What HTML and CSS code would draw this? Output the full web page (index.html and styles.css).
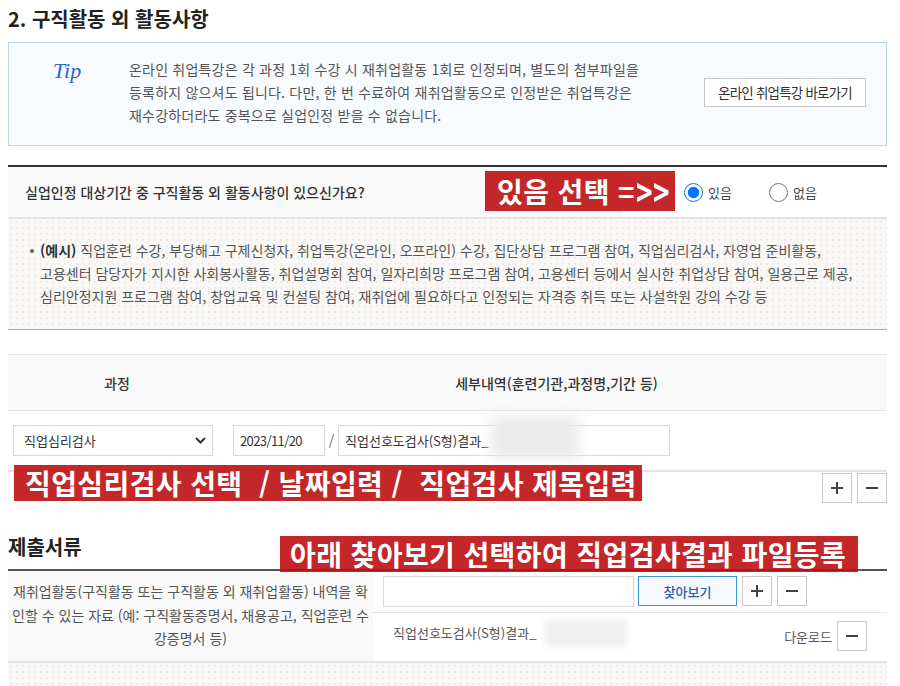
FILE: index.html
```html
<!DOCTYPE html>
<html lang="ko">
<head>
    <meta charset="utf-8">
    <title>재취업활동 - 구직활동 외 활동사항</title>
    <link rel="stylesheet" href="styles.css">
</head>
<body>
    <div class="wrap">
        <h3 class="sec-title">2. 구직활동 외 활동사항</h3>

        <div class="tip-box">
            <span class="tip-mark">Tip</span>
            <p class="tip-text">온라인 취업특강은 각 과정 1회 수강 시 재취업활동 1회로 인정되며, 별도의 첨부파일을<br>등록하지 않으셔도 됩니다. 다만, 한 번 수료하여 재취업활동으로 인정받은 취업특강은<br>재수강하더라도 중복으로 실업인정 받을 수 없습니다.</p>
            <a class="btn-line" href="#">온라인 취업특강 바로가기</a>
        </div>

        <div class="ask-row">
            <div class="ask-th">실업인정 대상기간 중 구직활동 외 활동사항이 있으신가요?</div>
            <div class="ask-td">
                <label class="radio-item"><input type="radio" name="hasAct" checked> 있음</label>
                <label class="radio-item"><input type="radio" name="hasAct"> 없음</label>
            </div>
            <span class="note note-radio">있음 선택 =<span class="chev">&gt;&gt;</span></span>
        </div>

        <div class="example-box">
            <ul>
                <li><strong>(예시)</strong> 직업훈련 수강, 부당해고 구제신청자, 취업특강(온라인, 오프라인) 수강, 집단상담 프로그램 참여, 직업심리검사, 자영업 준비활동,<br>고용센터 담당자가 지시한 사회봉사활동, 취업설명회 참여, 일자리희망 프로그램 참여, 고용센터 등에서 실시한 취업상담 참여, 일용근로 제공,<br>심리안정지원 프로그램 참여, 창업교육 및 컨설팅 참여, 재취업에 필요하다고 인정되는 자격증 취득 또는 사설학원 강의 수강 등</li>
            </ul>
        </div>

        <table class="course-table">
            <colgroup>
                <col class="col-course">
                <col>
            </colgroup>
            <thead>
                <tr>
                    <th>과정</th>
                    <th>세부내역(훈련기관,과정명,기간 등)</th>
                </tr>
            </thead>
            <tbody>
                <tr>
                    <td class="td-course">
                        <div class="sel-wrap">
                            <select class="sel">
                                <option>직업심리검사</option>
                            </select>
                            <svg class="sel-arrow" width="11" height="7" viewBox="0 0 11 7"><polyline points="1,1 5.5,5.5 10,1" fill="none" stroke="#333" stroke-width="2"/></svg>
                        </div>
                    </td>
                    <td class="td-detail">
                        <div class="detail-line">
                            <input class="inp inp-date" type="text" value="2023/11/20">
                            <span class="slash">/</span>
                            <input class="inp inp-title" type="text" value="직업선호도검사(S형)결과_">
                            <span class="blur-mask mask-title"></span>
                        </div>
                    </td>
                </tr>
            </tbody>
        </table>

        <div class="row-tools">
            <span class="note note-course">직업심리검사 선택&nbsp; / 날짜입력 /&nbsp; 직업검사 제목입력</span>
            <button class="btn-sq" type="button"><svg width="12" height="12" viewBox="0 0 12 12"><path d="M6 0v12M0 6h12" stroke="#444" stroke-width="2"/></svg></button>
            <button class="btn-sq" type="button"><svg width="12" height="12" viewBox="0 0 12 12"><path d="M0 6h12" stroke="#444" stroke-width="2"/></svg></button>
        </div>

        <div class="submit-section">
            <h3 class="sec-title sub-title">제출서류</h3>
            <span class="note note-file">아래 찾아보기 선택하여 직업검사결과 파일등록</span>

            <div class="file-table">
                <div class="file-th">재취업활동(구직활동 또는 구직활동 외 재취업활동) 내역을 확<br>인할 수 있는 자료 (예: 구직활동증명서, 채용공고, 직업훈련 수<br>강증명서 등)</div>
                <div class="file-td">
                    <div class="file-row">
                        <input class="inp inp-file" type="text" value="">
                        <button class="btn-find" type="button">찾아보기</button>
                        <button class="btn-sq" type="button"><svg width="12" height="12" viewBox="0 0 12 12"><path d="M6 0v12M0 6h12" stroke="#444" stroke-width="2"/></svg></button>
                        <button class="btn-sq" type="button"><svg width="12" height="12" viewBox="0 0 12 12"><path d="M0 6h12" stroke="#444" stroke-width="2"/></svg></button>
                    </div>
                    <div class="file-item">
                        <span class="file-name">직업선호도검사(S형)결과_</span>
                        <span class="blur-mask mask-file"></span>
                        <div class="file-act">
                            <span>다운로드</span>
                            <button class="btn-sq" type="button"><svg width="12" height="12" viewBox="0 0 12 12"><path d="M0 6h12" stroke="#444" stroke-width="2"/></svg></button>
                        </div>
                    </div>
                </div>
            </div>
            <div class="pattern-tail"></div>
        </div>
    </div>
</body>
</html>
```

FILE: styles.css
```css
* {
    box-sizing: border-box;
}
body {
    margin: 0;
    font-family: "Noto Sans CJK KR", "Noto Sans", sans-serif;
    font-size: 14px;
    color: #333;
    background-color: #ffffff;
    overflow: hidden;
}
.wrap {
    width: 879px;
    margin-left: 8px;
}
.sec-title {
    margin: 5px 0 9px;
    font-size: 20px;
    font-weight: 700;
    line-height: 28px;
    color: #222;
}

/* Tip 박스 */
.tip-box {
    display: flex;
    align-items: center;
    height: 104px;
    padding-bottom: 4px;
    border: 1px solid #bcd8e8;
    background-color: #f7fafe;
}
.tip-mark {
    align-self: flex-start;
    width: 120px;
    padding-left: 44px;
    margin-top: 15px;
    font-family: "Liberation Serif", serif;
    font-style: italic;
    font-size: 22px;
    color: #2a66c8;
}
.tip-text {
    flex: 1;
    margin: 0;
    line-height: 23px;
    letter-spacing: 0.2px;
    color: #555;
    white-space: nowrap;
}
.btn-line {
    display: inline-block;
    width: 162px;
    height: 29px;
    line-height: 27px;
    margin-right: 20px;
    border: 1px solid #c8c8c8;
    background-color: #fff;
    font-size: 13.5px;
    letter-spacing: -0.8px;
    text-align: center;
    color: #333;
    text-decoration: none;
}

/* 활동사항 여부 */
.ask-row {
    position: relative;
    display: flex;
    height: 54px;
    margin-top: 19px;
    border-top: 2px solid #333;
    border-bottom: 2px solid #e2e2e2;
}
.ask-th {
    display: flex;
    align-items: center;
    width: 615px;
    padding-left: 17px;
    background-color: #f9f9f9;
    font-weight: 500;
    color: #333;
}
.ask-td {
    display: flex;
    align-items: center;
    padding-left: 61px;
    gap: 37px;
}
.radio-item {
    display: flex;
    align-items: center;
    gap: 5px;
    font-size: 13px;
    color: #444;
}
.radio-item input {
    width: 19px;
    height: 19px;
    margin: 0;
}

/* 빨간 안내 라벨 */
.note {
    position: absolute;
    z-index: 5;
    background-color: rgba(189, 16, 18, 0.9);
    color: #fff;
    font-size: 28px;
    font-weight: 700;
    letter-spacing: 0.4px;
    white-space: nowrap;
}
.note-radio {
    left: 477px;
    top: 4px;
    width: 190px;
    height: 40px;
    line-height: 40px;
    padding-left: 12px;
}
.chev {
    display: inline-block;
    transform: scaleY(1.35);
    margin-left: 1px;
}
.note-course {
    left: 6px;
    top: -8px;
    width: 628px;
    height: 36px;
    line-height: 36px;
    padding-left: 11px;
}
.note-file {
    left: 272px;
    top: 3px;
    width: 578px;
    height: 36px;
    line-height: 36px;
    padding-left: 10px;
}

/* 예시 박스 */
.example-box,
.pattern-tail {
    background-color: #f9f8f6;
    background-image: radial-gradient(circle, #edebe7 1px, transparent 1.3px);
    background-size: 6px 6px;
}
.example-box {
    padding: 20px 0 21px;
    border-bottom: 1px solid #aaa;
}
.example-box ul {
    margin: 0;
    padding-left: 32px;
    list-style: none;
}
.example-box li {
    position: relative;
    line-height: 23px;
    color: #555;
    white-space: nowrap;
}
.example-box li::before {
    content: "";
    position: absolute;
    left: -10px;
    top: 10px;
    width: 4px;
    height: 4px;
    border-radius: 50%;
    background-color: #666;
}
.example-box strong {
    color: #333;
}

/* 과정 테이블 */
.course-table {
    width: 100%;
    margin-top: 24px;
    border-collapse: collapse;
}
.col-course {
    width: 218px;
}
.course-table th {
    height: 56px;
    background-color: #f9f9f9;
    border-top: 1px solid #e3e3e3;
    border-bottom: 1px solid #e3e3e3;
    font-weight: 500;
    color: #333;
}
.course-table td {
    height: 60px;
    padding: 0;
    border-bottom: 2px solid #e5e5e5;
}
.td-course {
    padding-left: 5px !important;
}
.td-detail {
    padding-left: 7px !important;
}
.detail-line {
    position: relative;
    display: flex;
    align-items: center;
}
.sel-wrap {
    position: relative;
    display: inline-block;
}
.sel {
    display: block;
    width: 200px;
    height: 31px;
    padding: 0 10px;
    border: 1px solid #d8d8d8;
    background-color: #fff;
    appearance: none;
    font-family: inherit;
    font-size: 13px;
    color: #333;
}
.sel-arrow {
    position: absolute;
    right: 7px;
    top: 12px;
}
.inp {
    height: 31px;
    padding: 0 6px;
    border: 1px solid #d8d8d8;
    background-color: #fff;
    font-family: inherit;
    font-size: 13px;
    color: #333;
}
.inp-date {
    width: 92px;
    letter-spacing: -0.6px;
}
.inp-title {
    width: 332px;
}
.slash {
    width: 13px;
    text-align: center;
    color: #666;
}
.blur-mask {
    position: absolute;
    background-color: #ebebeb;
    filter: blur(7px);
}
.mask-title {
    left: 258px;
    top: -10px;
    width: 88px;
    height: 44px;
}

/* +, - 버튼 */
.row-tools {
    position: relative;
    display: flex;
    justify-content: flex-end;
    gap: 5px;
    margin-top: 1px;
}
.btn-sq {
    display: flex;
    align-items: center;
    justify-content: center;
    width: 30px;
    height: 30px;
    padding: 0;
    border: 1px solid #c8c8c8;
    background-color: #fff;
    cursor: pointer;
}

/* 제출서류 */
.submit-section {
    position: relative;
}
.sub-title {
    margin: 30px 0 8px;
}
.file-table {
    display: flex;
    border-top: 2px solid #555;
    border-bottom: 2px solid #e5e5e5;
}
.file-th {
    display: flex;
    align-items: center;
    justify-content: center;
    width: 365px;
    height: 90px;
    background-color: #f9f9f9;
    line-height: 23.5px;
    text-align: center;
    color: #555;
    white-space: nowrap;
}
.file-td {
    flex: 1;
}
.file-row {
    display: flex;
    align-items: center;
    gap: 4px;
    height: 42px;
    padding: 0 0 0 10px;
    border-bottom: 1px solid #e5e5e5;
}
.inp-file {
    width: 251px;
}
.btn-find {
    width: 99px;
    height: 30px;
    border: 1px solid #3b98d6;
    background-color: #f6fafe;
    font-family: inherit;
    font-size: 13px;
    font-weight: 500;
    color: #2b60a6;
}
.file-row .btn-sq {
    margin-left: 1px;
}
.file-item {
    position: relative;
    display: flex;
    align-items: center;
    justify-content: space-between;
    height: 47px;
    padding: 0 20px;
    font-size: 13px;
}
.file-name {
    margin-top: -8px;
    color: #555;
}
.mask-file {
    left: 172px;
    top: 6px;
    width: 82px;
    height: 28px;
    background-color: #f0f0f0;
    filter: blur(3px);
}
.file-act {
    display: flex;
    align-items: center;
    gap: 5px;
    color: #555;
}
.pattern-tail {
    height: 40px;
}
```
